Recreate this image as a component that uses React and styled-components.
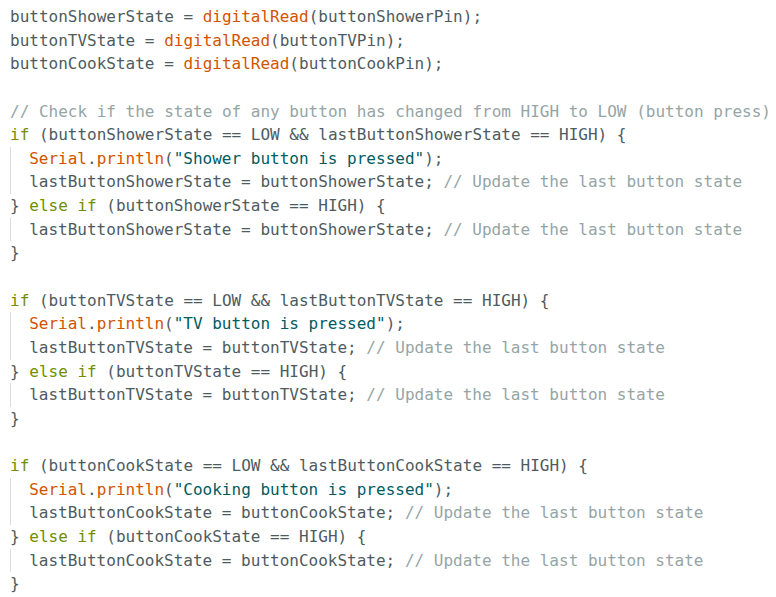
import React from 'react';
import styled, { createGlobalStyle } from 'styled-components';

const GlobalStyle = createGlobalStyle`
  html, body {
    margin: 0;
    padding: 0;
    background: #ffffff;
  }
`;

const COLORS = {
  text: '#4e5b61',
  keyword: '#728e00',
  func: '#d35400',
  string: '#005c5f',
  comment: '#95a5a6',
};

const Editor = styled.div`
  width: 776px;
  height: 597px;
  box-sizing: border-box;
  padding: 5px 0 0 10px;
  background: #ffffff;
  font-family: 'DejaVu Sans Mono', 'Liberation Mono', monospace;
  font-size: 16px;
  line-height: 23.65px;
  color: ${COLORS.text};
  overflow: hidden;
`;

const Line = styled.div`
  height: 23.65px;
  white-space: pre;
  display: flex;
`;

const IndentGuide = styled.span`
  display: inline-block;
  width: 19.2px;
  height: 100%;
  border-left: 1px solid #dcdcdc;
  box-sizing: border-box;
  flex-shrink: 0;
`;

const Token = styled.span`
  color: ${({ $kind }) => COLORS[$kind] || COLORS.text};
`;

// helpers to keep the source list readable
const t = (text) => ['text', text];
const k = (text) => ['keyword', text];
const f = (text) => ['func', text];
const s = (text) => ['string', text];
const c = (text) => ['comment', text];

const ifBlock = (name, label) => [
  { tokens: [k('if'), t(` (button${name}State == LOW && lastButton${name}State == HIGH) {`)] },
  { indent: true, tokens: [f('Serial'), t('.'), f('println'), t('('), s(`"${label} button is pressed"`), t(');')] },
  { indent: true, tokens: [t(`lastButton${name}State = button${name}State; `), c('// Update the last button state')] },
  { tokens: [t('} '), k('else if'), t(` (button${name}State == HIGH) {`)] },
  { indent: true, tokens: [t(`lastButton${name}State = button${name}State; `), c('// Update the last button state')] },
  { tokens: [t('}')] },
];

const LINES = [
  { tokens: [t('buttonShowerState = '), f('digitalRead'), t('(buttonShowerPin);')] },
  { tokens: [t('buttonTVState = '), f('digitalRead'), t('(buttonTVPin);')] },
  { tokens: [t('buttonCookState = '), f('digitalRead'), t('(buttonCookPin);')] },
  { tokens: [] },
  { tokens: [c('// Check if the state of any button has changed from HIGH to LOW (button press)')] },
  ...ifBlock('Shower', 'Shower'),
  { tokens: [] },
  ...ifBlock('TV', 'TV'),
  { tokens: [] },
  ...ifBlock('Cook', 'Cooking'),
];

const App = () => (
  <>
    <GlobalStyle />
    <Editor>
      {LINES.map((line, i) => (
        <Line key={i}>
          {line.indent && <IndentGuide />}
          {line.tokens.length === 0
            ? ' '
            : line.tokens.map(([kind, text], j) => (
                <Token key={j} $kind={kind}>
                  {text}
                </Token>
              ))}
        </Line>
      ))}
    </Editor>
  </>
);

export default App;
